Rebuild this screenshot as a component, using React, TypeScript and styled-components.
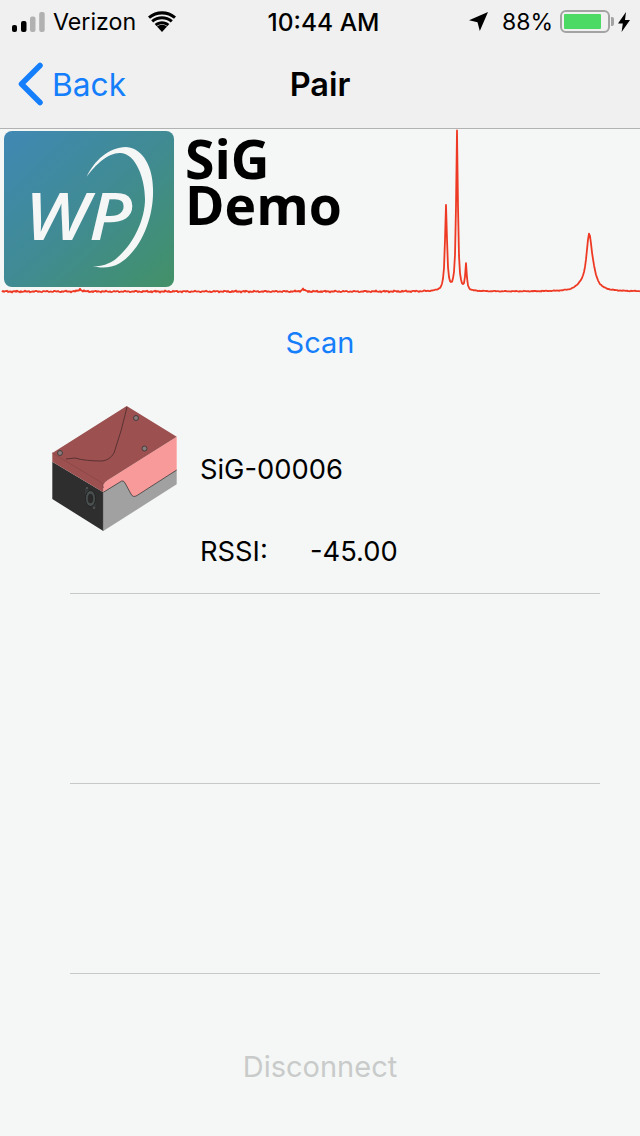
import React from "react";
import styled, { createGlobalStyle } from "styled-components";

const Global = createGlobalStyle`
  html, body { margin: 0; padding: 0; background: #f5f7f6; }
  #root { width: 640px; height: 1136px; overflow: hidden; }
`;

const ui = `Inter, "Liberation Sans", sans-serif`;

const Page = styled.div`
  width: 640px;
  height: 1136px;
  display: flex;
  flex-direction: column;
  background: #f5f7f6;
  font-family: ${ui};
  color: #000;
`;

const TopBars = styled.header`
  height: 128px;
  background: #f0f0f0;
  border-bottom: 1px solid #b2b2b2;
  display: flex;
  flex-direction: column;
`;

const StatusBar = styled.div`
  height: 43px;
  display: grid;
  grid-template-columns: 1fr auto 1fr;
  align-items: center;
  padding: 0 10px 0 12px;
`;

const StatusGroup = styled.div<{ $end?: boolean }>`
  display: flex;
  align-items: center;
  justify-content: ${(p) => (p.$end ? "flex-end" : "flex-start")};
`;

const Carrier = styled.span`
  font-size: 23.2px;
  margin: 0 12px 0 8px;
`;

const Clock = styled.span`
  font-size: 24.5px;
  font-weight: 500;
  margin-left: 5px;
`;

const Percent = styled.span`
  font-size: 23px;
  margin: 0 7px 0 14px;
`;

const Battery = styled.div`
  width: 50px;
  height: 23px;
  box-sizing: border-box;
  border: 2px solid #a3a3a3;
  border-radius: 6px;
  padding: 2px;
  display: flex;
  position: relative;
  margin-right: 8px;
  &::after {
    content: "";
    position: absolute;
    right: -6px;
    top: 5px;
    width: 3px;
    height: 9px;
    background: #a3a3a3;
    border-radius: 0 2px 2px 0;
  }
`;

const BatteryLevel = styled.div`
  background: #4cd964;
  border-radius: 1px;
  height: 100%;
`;

const NavBar = styled.nav`
  flex: 1;
  display: grid;
  grid-template-columns: 1fr auto 1fr;
  align-items: center;
  padding: 0 18px 3px;
`;

const BackLink = styled.a`
  display: flex;
  align-items: center;
  gap: 9px;
  color: #147efb;
  font-size: 31.7px;
`;

const NavTitle = styled.h1`
  margin: 0;
  font-size: 32.5px;
  font-weight: 600;
`;

const Banner = styled.section`
  position: relative;
  height: 165px;
  display: flex;
  align-items: flex-start;
  padding: 2px 0 0 4px;
  box-sizing: border-box;
`;

const Spectrum = styled.svg`
  position: absolute;
  left: 0;
  top: 0;
`;

const Logo = styled.svg`
  position: relative;
  flex: none;
`;

const BrandTitle = styled.h2`
  position: relative;
  margin: 5px 0 0 11px;
  font-family: "Open Sans", "Noto Sans", sans-serif;
  font-size: 53.5px;
  line-height: 46px;
  font-weight: 700;
`;

const ScanButton = styled.div`
  margin-top: 29px;
  height: 40px;
  line-height: 40px;
  text-align: center;
  font-size: 29px;
  color: #147efb;
`;

const List = styled.div`
  flex: 1;
  display: flex;
  flex-direction: column;
  padding: 0 40px 0 0;
`;

const Slot = styled.div<{ $first?: boolean }>`
  height: ${(p) => (p.$first ? "230px" : "189px")};
  margin-left: 70px;
  border-bottom: 1px solid #c8c8c8;
  box-sizing: content-box;
`;

const DeviceRow = styled.div`
  display: flex;
  margin-left: -18px;
  padding-top: 42px;
`;

const DeviceInfo = styled.div`
  margin: 49px 0 0 22px;
  display: flex;
  flex-direction: column;
  gap: 50px;
  font-size: 27.3px;
  line-height: 32px;
  white-space: nowrap;
`;

const RssiLine = styled.div`
  display: flex;
`;

const RssiLabel = styled.span`
  width: 110px;
`;

const Disconnect = styled.div`
  height: 40px;
  line-height: 40px;
  margin-bottom: 49px;
  text-align: center;
  font-size: 29px;
  color: #c9cbca;
`;

const peak = (x: number, c: number, h: number, w: number) =>
  h / (1 + ((x - c) / w) ** 2);

const noise = (x: number) =>
  (Math.sin(x * 1.7) + Math.sin(x * 0.63 + 1) + Math.sin(x * 3.1 + 2)) * 0.35;

const spectrumPoints = () => {
  const pts: string[] = [];
  for (let x = 2; x <= 640; x += 1) {
    let y = 163 - 0.5 + noise(x) * (x < 430 ? 1 : 0.5);
    y -= peak(x, 80, 2.5, 1.5) + peak(x, 303, 2.5, 1.5);
    y -= peak(x, 446, 85, 1.2);
    y -= peak(x, 457, 160, 1.05);
    y -= peak(x, 466, 26, 0.9);
    y -= peak(x, 589, 47, 3.2);
    y -= peak(x, 592, 14, 5);
    y -= peak(x, 580, 3, 5);
    pts.push(`${x},${Math.max(1.5, y).toFixed(1)}`);
  }
  return pts.join(" ");
};

const SignalIcon = () => (
  <svg width="33" height="20" viewBox="0 0 33 20">
    <rect x="0" y="13" width="5" height="7" rx="2" fill="#000" />
    <rect x="9" y="9" width="5.5" height="11" rx="2" fill="#000" />
    <rect x="18" y="4.5" width="5.5" height="15.5" rx="2" fill="#b1b1b1" />
    <rect x="27.2" y="0" width="5.5" height="20" rx="2" fill="#b1b1b1" />
  </svg>
);

const WifiIcon = () => (
  <svg width="28" height="21" viewBox="0 0 28 21">
    <path d="M14 21l-5-5.6c2.9-2.3 7.1-2.3 10 0z" fill="#000" />
    <path d="M6.7 13c4.2-3.6 10.400-3.600 14.600 0l-2 2.200c-3.100-2.500-7.500-2.500-10.600 0z" fill="#000" />
    <path d="M3.200 9.200c6.200-5.400 15.400-5.400 21.600 0l-2 2.200c-5.100-4.300-12.500-4.300-17.600 0z" fill="#000" />
    <path d="M0 5.600c8-7 20-7 28 0l-2 2.200c-6.900-5.900-17.100-5.900-24 0z" fill="#000" />
  </svg>
);

const LocationIcon = () => (
  <svg width="19" height="19" viewBox="0 0 19 19">
    <path d="M19 0L10.800 19l-2.300-8.700L0 8.300z" fill="#000" />
  </svg>
);

const BoltIcon = () => (
  <svg width="12" height="20" viewBox="0 0 12 20">
    <path d="M8 0L0 11.500h4.800L3.600 20l8.400-12H7z" fill="#000" />
  </svg>
);

const ChevronIcon = () => (
  <svg width="25" height="44" viewBox="0 0 25 44">
    <path d="M22 3.500L3.500 22 22 40.500" fill="none" stroke="#147efb" strokeWidth="5.500" strokeLinecap="round" strokeLinejoin="round" />
  </svg>
);

const WpLogo = () => (
  <Logo width="170" height="156" viewBox="0 0 170 156">
    <defs>
      <linearGradient id="wp-bg" x1="0" y1="0" x2="1" y2="1">
        <stop offset="0" stopColor="#4088b4" />
        <stop offset="0.5" stopColor="#408b93" />
        <stop offset="1" stopColor="#429167" />
      </linearGradient>
    </defs>
    <rect width="170" height="156" rx="8" fill="url(#wp-bg)" />
    <text
      x="21"
      y="109"
      fontFamily="'Open Sans', sans-serif"
      fontStyle="italic"
      fontWeight="600"
      fontSize="66"
      fill="#f5f7f6"
      textLength="107"
      lengthAdjust="spacingAndGlyphs"
    >
      WP
    </text>
    <path
      d="M82.700 45.700C90 30 105 16 122 16C140 17 149 38 149 58C150 85 138 118 116 132C106 138 95 137 89 135C98 136 108 132 114 126C130 112 141 88 141 68C141 48 132 23 117 22C105 21 92 33 82.700 45.700Z"
      fill="#f5f7f6"
    />
  </Logo>
);

const DeviceImage = () => (
  <svg width="126" height="126" viewBox="52 405 126 126">
    <polygon points="52.300,461.700 103.300,492.300 103.300,531 52.300,499" fill="#2e2e2e" />
    <path d="M103.300,492.300 L121.700,481 Q124,480.500 125,483 L131,494 Q133,498 137,495.500 L176.700,470 L176.700,484.300 L103.300,531 Z" fill="#a1a1a1" />
    <path d="M176.700,436.700 L176.700,470 L137,495.500 Q133,498 131,494 L125,483 Q124,480.500 121.700,481 L103.300,492.300 L103.300,486 Q103,483 108,480 Z" fill="#f99a9a" />
    <path d="M126.700,406 L176.700,436.700 L108,480 Q103.300,483 103.300,486 L103.300,492.300 L52.300,461.700 L52.300,453 Z" fill="#9c5050" />
    <path d="M52.300,453 L99,481 Q103,483 103.300,488" fill="none" stroke="#8e4848" strokeWidth="1" />
    <path d="M127,407 Q122,430 114,453 Q110,460 102,461 Q85,461 75,458 L66,459" fill="none" stroke="#4a2a2a" strokeWidth="0.800" />
    <path d="M103.300,492.300 L121.700,481 Q124,480.500 125,483 L131,494 Q133,498 137,495.500 L176.700,470" fill="none" stroke="#333" strokeWidth="0.800" />
    <circle cx="136" cy="418" r="2.500" fill="#8a7a7a" stroke="#333" strokeWidth="0.800" />
    <circle cx="144.500" cy="448.500" r="2.500" fill="#8a7a7a" stroke="#333" strokeWidth="0.800" />
    <circle cx="60" cy="453" r="2.500" fill="#8a7a7a" stroke="#333" strokeWidth="0.800" />
    <polygon points="85,488 95.500,494 95.500,509 85,503" fill="#363a3a" />
    <ellipse cx="90.500" cy="498.500" rx="5" ry="8" fill="#4a5050" stroke="#1a1a1a" strokeWidth="0.800" />
    <ellipse cx="90.500" cy="498.500" rx="2.800" ry="4.800" fill="#2a2a2a" />
    <circle cx="87" cy="488" r="1" fill="#5a5a5a" />
    <circle cx="94" cy="508" r="1" fill="#5a5a5a" />
    <line x1="103.300" y1="492.300" x2="103.300" y2="531" stroke="#777" strokeWidth="0.600" />
  </svg>
);

export default function App() {
  return (
    <Page>
      <Global />
      <TopBars>
        <StatusBar>
          <StatusGroup>
            <SignalIcon />
            <Carrier>Verizon</Carrier>
            <WifiIcon />
          </StatusGroup>
          <Clock>10:44 AM</Clock>
          <StatusGroup $end>
            <LocationIcon />
            <Percent>88%</Percent>
            <Battery>
              <BatteryLevel style={{ width: "88%" }} />
            </Battery>
            <BoltIcon />
          </StatusGroup>
        </StatusBar>
        <NavBar>
          <BackLink>
            <ChevronIcon />
            Back
          </BackLink>
          <NavTitle>Pair</NavTitle>
        </NavBar>
      </TopBars>
      <Banner>
        <Spectrum width="640" height="165" viewBox="0 0 640 165">
          <polyline points={spectrumPoints()} fill="none" stroke="#ee3a24" strokeWidth="1.800" strokeLinejoin="round" />
        </Spectrum>
        <WpLogo />
        <BrandTitle>
          SiG
          <br />
          Demo
        </BrandTitle>
      </Banner>
      <ScanButton>Scan</ScanButton>
      <List>
        <Slot $first>
          <DeviceRow>
            <DeviceImage />
            <DeviceInfo>
              <span>SiG-00006</span>
              <RssiLine>
                <RssiLabel>RSSI:</RssiLabel>
                <span>-45.00</span>
              </RssiLine>
            </DeviceInfo>
          </DeviceRow>
        </Slot>
        <Slot />
        <Slot />
      </List>
      <Disconnect>Disconnect</Disconnect>
    </Page>
  );
}
